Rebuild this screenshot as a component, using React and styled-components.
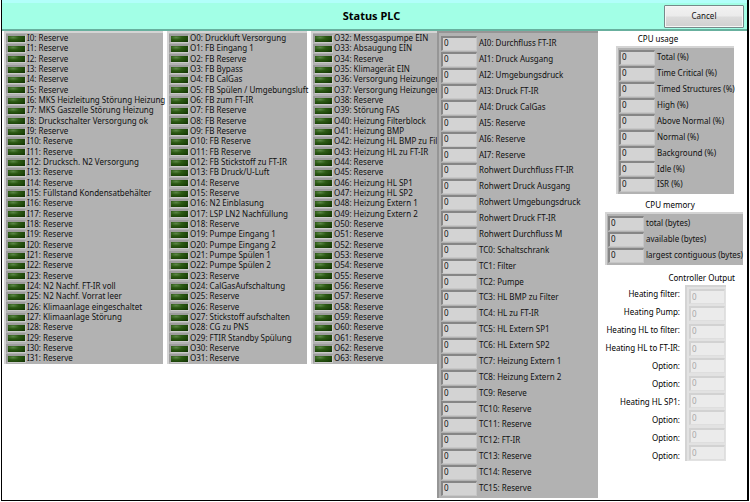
import React from "react";
import styled, { createGlobalStyle } from "styled-components";

const GlobalStyle = createGlobalStyle`
  *, *::before, *::after { box-sizing: border-box; }
  body { margin: 0; background: #fff; color: #101010; font: 8px/10px "Noto Sans", "Open Sans", sans-serif; }
  input, button { font: inherit; color: inherit; }
`;

const Window = styled.div`
  display: flex;
  flex-direction: column;
  min-height: calc(100vh - 1px);
  border: 1px solid #000;
  border-width: 0 2px 1px 1px;
  margin: 0 1px;
`;

const Header = styled.header`
  display: grid;
  grid-template-columns: 1fr auto 1fr;
  align-items: center;
  height: 31px;
  padding: 0 3px;
  border-top: 3px solid #b2fffa;
  border-bottom: 2px solid #68b09e;
  background: #a2ffe6;
`;

const Title = styled.h1`
  grid-column: 2;
  margin: 0 6px 0 0;
  font-size: 11px;
  line-height: 16px;
  font-weight: 700;
  color: #000;
`;

const CancelButton = styled.button`
  justify-self: end;
  width: 80px;
  height: 23px;
  padding: 0;
  border: 1px solid #76898a;
  border-radius: 1px;
  background: linear-gradient(#f2f2f2, #ebebeb 48%, #dcdcdc 52%, #d0d0d0);
  box-shadow: inset 0 0 0 1px #f6f6f6;
`;

const Main = styled.main`
  display: grid;
  grid-template-columns: minmax(0, 159fr) minmax(0, 140fr) minmax(0, 287fr) minmax(0, 145fr);
  column-gap: 4px;
  align-items: start;
  flex: 1;
  padding: 0 0 1px 2px;
`;

const Overlap = styled.div`
  display: grid;
  grid-template-columns: minmax(0, 126fr) minmax(0, 161fr);
  align-items: start;
`;

const Panel = styled.section`
  min-width: 0;
  border: solid ${(p) => (p.$raised ? "#969696" : "#d4d4d4")};
  border-width: 2px 0 0 2px;
  background: ${(p) => (p.$faded ? "#e2e2e2" : "#b2b2b2")};
`;

const LedList = styled.ul`
  list-style: none;
  margin: 0;
  padding: 0 0 1px;
`;

const LedRow = styled.li`
  display: flex;
  align-items: center;
  gap: 1px;
  height: 10px;
  white-space: nowrap;
  &:nth-child(3n) { height: 11px; }
`;

const Led = styled.span`
  flex: none;
  width: 20px;
  height: 9px;
  border: solid;
  border-width: 2px 1px 1px 2px;
  border-color: #9c9c9c #cacaca #cacaca #9c9c9c;
  background: radial-gradient(ellipse at 30% 25%, #5b8746 0, #2c5a14 35%, #1b4208 75%, #102b04 100%);
`;

const FieldList = styled.div`
  padding: ${(p) => (p.$tight ? "1px 0 2px 1px" : "2px")};
`;

const FieldRow = styled.div`
  display: flex;
  align-items: center;
  gap: 2px;
  height: 16px;
  white-space: nowrap;
  &:nth-child(8n) { height: 15px; }
`;

const ValueInput = styled.input`
  flex: none;
  width: 36px;
  height: 15px;
  padding: 0 0 2px 1px;
  border: solid;
  border-width: 2px 1px 1px 2px;
  border-color: #868686 #c6c6c6 #c6c6c6 #868686;
  border-radius: 0;
  background: #d3d3d3;
  outline: none;
  &:disabled {
    border-color: #d2d2d2 #dedede #dedede #d2d2d2;
    background: #ebebeb;
    color: #a8a8a8;
  }
`;

const Side = styled.aside`
  display: flex;
  flex-direction: column;
`;

const Group = styled.div`
  display: flex;
  flex-direction: column;
  margin: ${(p) => p.$margin};
`;

const GroupTitle = styled.h2`
  margin: 0;
  padding: ${(p) => p.$pad};
  font-size: 8px;
  line-height: 14px;
  font-weight: 400;
  text-align: ${(p) => p.$align || "center"};
  color: #000;
`;

const Controller = styled.div`
  display: flex;
  justify-content: flex-end;
  align-items: flex-start;
  gap: 5px;
  padding-right: 9px;
`;

const ControllerLabels = styled.div`
  display: flex;
  flex-direction: column;
  text-align: right;
  color: #000;
  label { line-height: 18px; }
`;

const ControllerSlot = styled.div`
  display: flex;
  align-items: center;
  height: 17px;
  padding-left: 2px;
  &:nth-child(3n) { height: 18px; }
`;

const ControllerPanel = styled(Panel)`
  width: 41px;
  padding: 1px 0 0;
`;

const R = "Reserve";
const inputs = [R, R, R, R, R, R, "MKS Heizleitung Störung Heizung", "MKS Gaszelle Störung Heizung",
  "Druckschalter Versorgung ok", R, R, R, "Drucksch. N2 Versorgung", R, R, "Füllstand Kondensatbehälter",
  R, R, R, R, R, R, R, R, "N2 Nachf. FT-IR voll", "N2 Nachf. Vorrat leer", "Klimaanlage eingeschaltet",
  "Klimaanlage Störung", R, R, R, R];
const outputsLow = ["Druckluft Versorgung", "FB Eingang 1", "FB Reserve", "FB Bypass", "FB CalGas",
  "FB Spülen / Umgebungsluft", "FB zum FT-IR", "FB Reserve", "FB Reserve", "FB Reserve", "FB Reserve",
  "FB Reserve", "FB Stickstoff zu FT-IR", "FB Druck/U-Luft", R, R, "N2 Einblasung", "LSP LN2 Nachfüllung",
  R, "Pumpe Eingang 1", "Pumpe Eingang 2", "Pumpe Spülen 1", "Pumpe Spülen 2", R, "CalGasAufschaltung",
  R, R, "Stickstoff aufschalten", "CG zu PNS", "FTIR Standby Spülung", R, R];
const outputsHigh = ["Messgaspumpe EIN", "Absaugung EIN", R, "Klimagerät EIN", "Versorgung Heizungen",
  "Versorgung Heizungen", R, "Störung FAS", "Heizung Filterblock", "Heizung BMP", "Heizung HL BMP zu Filter",
  "Heizung HL zu FT-IR", R, R, "Heizung HL SP1", "Heizung HL SP2", "Heizung Extern 1", "Heizung Extern 2",
  R, R, R, R, R, R, R, R, R, R, R, R, R, R];
const analog = ["AI0: Durchfluss FT-IR", "AI1: Druck Ausgang", "AI2: Umgebungsdruck", "AI3: Druck FT-IR",
  "AI4: Druck CalGas", "AI5: Reserve", "AI6: Reserve", "AI7: Reserve", "Rohwert Durchfluss FT-IR",
  "Rohwert Druck Ausgang", "Rohwert Umgebungsdruck", "Rohwert Druck FT-IR", "Rohwert Durchfluss M",
  "TC0: Schaltschrank", "TC1: Filter", "TC2: Pumpe", "TC3: HL BMP zu Filter", "TC4: HL zu FT-IR",
  "TC5: HL Extern SP1", "TC6: HL Extern SP2", "TC7: Heizung Extern 1", "TC8: Heizung Extern 2",
  "TC9: Reserve", "TC10: Reserve", "TC11: Reserve", "TC12: FT-IR", "TC13: Reserve", "TC14: Reserve",
  "TC15: Reserve"];
const cpuUsage = ["Total (%)", "Time Critical (%)", "Timed Structures (%)", "High (%)", "Above Normal (%)",
  "Normal (%)", "Background (%)", "Idle (%)", "ISR (%)"];
const cpuMemory = ["total (bytes)", "available (bytes)", "largest contiguous (bytes)"];
const controller = ["Heating filter:", "Heating Pump:", "Heating HL to filter:", "Heating HL to FT-IR:",
  "Option:", "Option:", "Heating HL SP1:", "Option:", "Option:", "Option:"];

function LedPanel({ prefix, start = 0, names }) {
  return (
    <Panel>
      <LedList>
        {names.map((name, i) => (
          <LedRow key={i}>
            <Led />
            <span>{`${prefix}${start + i}: ${name}`}</span>
          </LedRow>
        ))}
      </LedList>
    </Panel>
  );
}

function FieldPanel({ id, labels, raised, tight }) {
  return (
    <Panel $raised={raised}>
      <FieldList $tight={tight}>
        {labels.map((label, i) => (
          <FieldRow key={label}>
            <ValueInput id={`${id}-${i}`} readOnly value="0" />
            <label htmlFor={`${id}-${i}`}>{label}</label>
          </FieldRow>
        ))}
      </FieldList>
    </Panel>
  );
}

export default function App() {
  return (
    <>
      <GlobalStyle />
      <Window>
        <Header>
          <Title>Status PLC</Title>
          <CancelButton type="button">Cancel</CancelButton>
        </Header>
        <Main>
          <LedPanel prefix="I" names={inputs} />
          <LedPanel prefix="O" names={outputsLow} />
          <Overlap>
            <LedPanel prefix="O" start={32} names={outputsHigh} />
            <FieldPanel id="analog" labels={analog} raised />
          </Overlap>
          <Side>
            <Group $margin="1px 13px 0 14px">
              <GroupTitle $pad="0 34px 0 0">CPU usage</GroupTitle>
              <FieldPanel id="usage" labels={cpuUsage} tight />
            </Group>
            <Group $margin="4px 4px 0 3px">
              <GroupTitle $pad="0 8px 0 0">CPU memory</GroupTitle>
              <FieldPanel id="memory" labels={cpuMemory} tight />
            </Group>
            <Group $margin="6px 12px 0 0">
              <GroupTitle $pad="0" $align="right">Controller Output</GroupTitle>
              <Controller>
                <ControllerLabels>
                  {controller.map((label, i) => (
                    <label key={i} htmlFor={`controller-${i}`}>{label}</label>
                  ))}
                </ControllerLabels>
                <ControllerPanel $faded>
                  {controller.map((label, i) => (
                    <ControllerSlot key={i}>
                      <ValueInput id={`controller-${i}`} disabled value="0" readOnly />
                    </ControllerSlot>
                  ))}
                </ControllerPanel>
              </Controller>
            </Group>
          </Side>
        </Main>
      </Window>
    </>
  );
}
